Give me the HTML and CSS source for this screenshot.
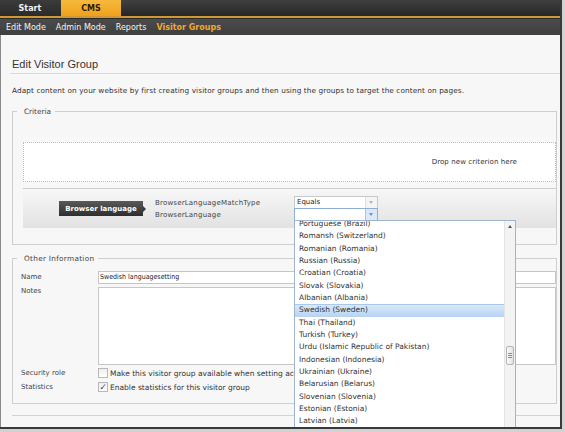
FILE: index.html
```html
<!DOCTYPE html>
<html>
<head>
<meta charset="utf-8">
<title>Edit Visitor Group</title>
<link rel="stylesheet" href="styles.css">
</head>
<body>
<div class="window">
  <div class="topbar">
    <div class="tab tab-start">Start</div>
    <div class="tab tab-cms">CMS</div>
  </div>
  <div class="accent"></div>
  <div class="subnav">
    <span>Edit Mode</span>
    <span>Admin Mode</span>
    <span>Reports</span>
    <span class="active">Visitor Groups</span>
  </div>
  <div class="content">
    <h1 class="title">Edit Visitor Group</h1>
    <p class="intro">Adapt content on your website by first creating visitor groups and then using the groups to target the content on pages.</p>

    <fieldset class="group criteria">
      <legend>Criteria</legend>
      <div class="dropzone">Drop new criterion here</div>
      <div class="criterion">
        <div class="crit-btn">Browser language</div>
        <div class="crit-labels">
          <div>BrowserLanguageMatchType</div>
          <div>BrowserLanguage</div>
        </div>
        <div class="crit-selects">
          <div class="select"><span class="val">Equals</span><span class="arrow"></span></div>
          <div class="select focused"><span class="val"></span><span class="arrow"></span></div>
        </div>
      </div>
    </fieldset>

    <fieldset class="group other">
      <legend>Other Information</legend>
      <div class="row row-name">
        <label>Name</label>
        <div class="input">Swedish languagesetting</div>
      </div>
      <div class="row row-notes">
        <label>Notes</label>
        <div class="textarea"></div>
      </div>
      <div class="row row-check">
        <label>Security role</label>
        <div class="check"><span class="box"></span>Make this visitor group available when setting access rights</div>
      </div>
      <div class="row row-check row-stats">
        <label>Statistics</label>
        <div class="check"><span class="box checked">&#10003;</span>Enable statistics for this visitor group</div>
      </div>
    </fieldset>
    <div class="footer-line"></div>
  </div>

  <div class="dropdown">
    <div class="items">
      <div class="item">Portuguese (Brazil)</div>
      <div class="item">Romansh (Switzerland)</div>
      <div class="item">Romanian (Romania)</div>
      <div class="item">Russian (Russia)</div>
      <div class="item">Croatian (Croatia)</div>
      <div class="item">Slovak (Slovakia)</div>
      <div class="item">Albanian (Albania)</div>
      <div class="item selected">Swedish (Sweden)</div>
      <div class="item">Thai (Thailand)</div>
      <div class="item">Turkish (Turkey)</div>
      <div class="item">Urdu (Islamic Republic of Pakistan)</div>
      <div class="item">Indonesian (Indonesia)</div>
      <div class="item">Ukrainian (Ukraine)</div>
      <div class="item">Belarusian (Belarus)</div>
      <div class="item">Slovenian (Slovenia)</div>
      <div class="item">Estonian (Estonia)</div>
      <div class="item">Latvian (Latvia)</div>
    </div>
    <div class="scrollbar">
      <span class="up"></span>
      <span class="thumb"><i></i><i></i><i></i></span>
    </div>
  </div>
</div>
</body>
</html>
```

FILE: styles.css
```css
html, body {
  margin: 0;
  padding: 0;
}
body {
  background: #d2d2d2;
  font-family: "DejaVu Sans", Verdana, sans-serif;
  font-size: 7px;
  color: #333;
}
.window {
  position: relative;
  width: 560px;
  height: 427px;
  overflow: hidden;
  background: #f7f7f7;
  border-right: 2px solid #3a3a3a;
  border-bottom: 2px solid #3a3a3a;
}

/* top tabs */
.topbar {
  display: flex;
  gap: 1px;
  height: 16px;
  background: linear-gradient(#404040, #262626);
}
.tab {
  width: 60px;
  display: flex;
  align-items: center;
  justify-content: center;
  font-weight: bold;
  font-size: 8px;
}
.tab-start {
  background: linear-gradient(#3b3b3b, #2b2b2b);
  color: #f2f2f2;
}
.tab-cms {
  background: linear-gradient(#f7b93c, #eea11d);
  color: #2b1c05;
}
.accent {
  height: 2px;
  background: #cf9836;
  border-bottom: 1px solid #2a2a2a;
}
.subnav {
  display: flex;
  align-items: center;
  gap: 10px;
  height: 16px;
  padding-left: 6px;
  background: linear-gradient(#4b4b4b, #3f3f3f);
  color: #f4f4f4;
  font-size: 8px;
}
.subnav .active {
  color: #f0a82c;
  font-weight: bold;
}

/* content */
.content {
  border-left: 1px solid #8a8a8a;
  height: 392px;
}
.title {
  margin: 0 0 0 9px;
  padding: 22px 0 2px 2px;
  font: normal 11px/14px "Liberation Sans", Arial, sans-serif;
  color: #333;
  border-bottom: 1px solid #dadada;
}
.intro {
  margin: 12px 0 0 11px;
  font-size: 7.3px;
  line-height: 9px;
  color: #333;
  letter-spacing: 0.1px;
}

.group {
  margin: 12px 3px 0 11px;
  border: 1px solid #cfcfcf;
  padding: 0 0 16px 10px;
  min-width: 0;
}
.group legend {
  margin-left: -6px;
  padding: 0 4px 0 7px;
  font-size: 7.3px;
  line-height: 9px;
  color: #444;
}

.dropzone {
  margin-top: 26px;
  height: 38px;
  border: 1px dotted #bdbdbd;
  background: #fff;
  display: flex;
  align-items: center;
  justify-content: flex-end;
  padding-right: 38px;
  color: #333;
  letter-spacing: 0.1px;
}

.criterion {
  margin-top: 6px;
  height: 39px;
  border-top: 1px solid #cdcdcd;
  background: linear-gradient(#f7f7f7, #e2e2e2);
  display: flex;
  align-items: center;
}
.crit-btn {
  position: relative;
  margin-left: 36px;
  width: 84px;
  height: 15px;
  display: flex;
  align-items: center;
  justify-content: center;
  background: linear-gradient(#5a5a5a, #2e2e2e);
  color: #fff;
  font-weight: bold;
  font-size: 7px;
}
.crit-btn::after {
  content: "";
  position: absolute;
  right: -3px;
  top: 5px;
  border-left: 3px solid #3a3a3a;
  border-top: 3px solid transparent;
  border-bottom: 3px solid transparent;
}
.crit-labels {
  margin-left: 12px;
  width: 139px;
  line-height: 12px;
  color: #444;
  letter-spacing: 0.2px;
}
.select {
  display: flex;
  width: 84px;
  height: 13px;
  box-sizing: border-box;
  border: 1px solid #c9c9c9;
  background: #fff;
}
.select + .select {
  margin-top: -1px;
}
.select .val {
  flex: 1;
  padding-left: 2px;
  line-height: 11px;
  color: #222;
}
.select .arrow {
  position: relative;
  width: 11px;
  border-left: 1px solid #dedede;
  background: #f4f4f4;
}
.select .arrow::after {
  content: "";
  position: absolute;
  left: 3px;
  top: 4px;
  border-top: 3px solid #b3b3b3;
  border-left: 2px solid transparent;
  border-right: 2px solid transparent;
}
.select.focused {
  border-color: #8eb0d8;
}
.select.focused .arrow {
  background: #dbe8f6;
  border-left-color: #a9c4e4;
}
.select.focused .arrow::after {
  border-top-color: #6f93c2;
}

/* other information */
.other {
  padding-left: 8px;
  padding-bottom: 11px;
  margin-top: 9px;
}
.other legend {
  margin-left: -4px;
  letter-spacing: 0.3px;
}
.row {
  display: flex;
  align-items: center;
}
.row label {
  width: 77px;
  flex: none;
  color: #444;
  line-height: 9px;
}
.row-name {
  margin-top: 8px;
}
.input {
  flex: 1;
  height: 13px;
  box-sizing: border-box;
  border: 1px solid #c6c6c6;
  background: #fff;
  padding-left: 1px;
  font: 7px/11px "DejaVu Sans Condensed", "Liberation Sans", sans-serif;
  color: #222;
}
.row-notes {
  margin-top: 3px;
  align-items: flex-start;
}
.textarea {
  flex: 1;
  height: 78px;
  box-sizing: border-box;
  border: 1px solid #c6c6c6;
  background: #fff;
}
.row-check {
  margin-top: 3px;
  height: 10px;
}
.row-stats {
  margin-top: 4px;
}
.check {
  display: flex;
  align-items: center;
  gap: 2px;
  width: 196px;
  overflow: hidden;
  white-space: nowrap;
  font-size: 7.5px;
  color: #333;
}
.box {
  flex: none;
  width: 10px;
  height: 10px;
  box-sizing: border-box;
  border: 1px solid #b8b8b8;
  background: linear-gradient(#eeeeee, #ffffff);
  display: flex;
  align-items: center;
  justify-content: center;
  font-size: 9px;
  line-height: 8px;
  color: #2b4f9a;
  font-weight: bold;
}
.footer-line {
  margin: 11px 0 0 11px;
  border-top: 1px solid #d3d3d3;
}

/* dropdown list */
.dropdown {
  position: absolute;
  left: 294px;
  top: 220px;
  width: 222px;
  height: 215px;
  box-sizing: border-box;
  border: 1px solid #9fb4cd;
  background: #fff;
  overflow: hidden;
}
.items {
  margin-top: -3px;
  margin-right: 11px;
}
.item {
  height: 12.33px;
  line-height: 12.33px;
  padding-left: 4px;
  font-size: 7.5px;
  color: #333;
  white-space: nowrap;
}
.item.selected {
  background: linear-gradient(#dcebfa, #b7d3f1);
  box-shadow: inset 0 1px 0 #a9c8ea;
}
.scrollbar {
  position: absolute;
  top: 0;
  right: 0;
  bottom: 0;
  width: 11px;
  box-sizing: border-box;
  background: #f3f3f3;
  border-left: 1px solid #e4e4e4;
}
.scrollbar .up {
  position: absolute;
  left: 3px;
  top: 4px;
  border-bottom: 3px solid #555;
  border-left: 2px solid transparent;
  border-right: 2px solid transparent;
}
.scrollbar .thumb {
  position: absolute;
  left: 1px;
  top: 125px;
  width: 8px;
  height: 19px;
  box-sizing: border-box;
  border: 1px solid #b4b4b4;
  border-radius: 2px;
  background: linear-gradient(to right, #fafafa, #e2e2e2);
  display: flex;
  flex-direction: column;
  align-items: center;
  justify-content: center;
  gap: 1px;
}
.scrollbar .thumb i {
  display: block;
  width: 4px;
  height: 1px;
  background: #8d8d8d;
}
```
